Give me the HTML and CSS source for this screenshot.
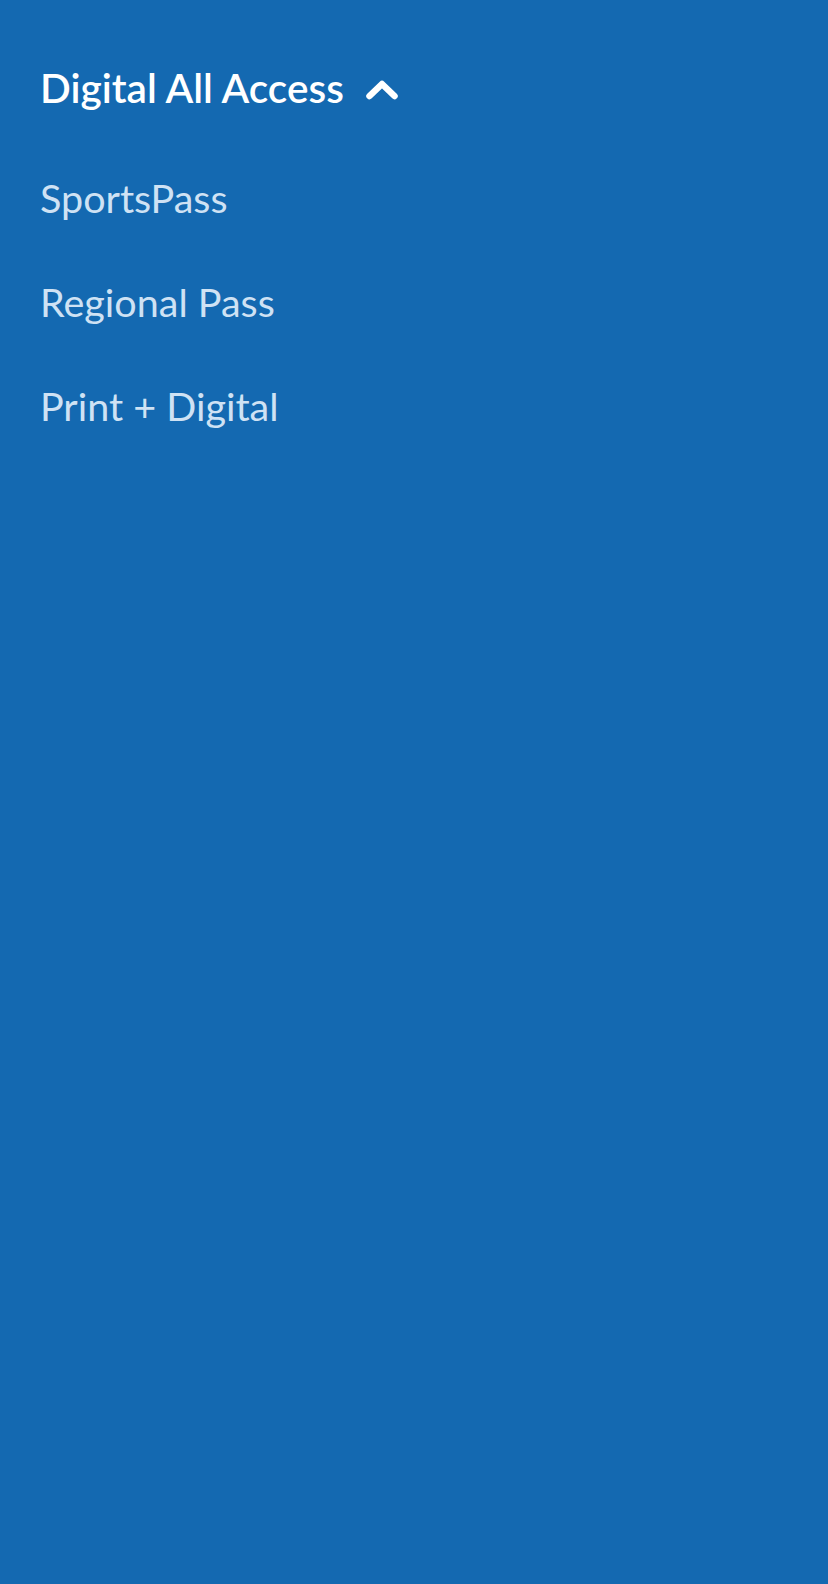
FILE: index.html
```
<!DOCTYPE html>
<html>
<head>
<meta charset="utf-8">
<link rel="stylesheet" href="styles.css">
</head>
<body>
<nav class="menu">
  <div class="menu-head">
    <span class="menu-title">Digital All Access</span>
    <svg class="chev" width="32" height="22" viewBox="0 0 32 22"><path d="M3.5 18 L16 6 L28.5 18" fill="none" stroke="#fff" stroke-width="6.5" stroke-linecap="round" stroke-linejoin="round"/></svg>
  </div>
  <ul class="menu-list">
    <li class="menu-item">SportsPass</li>
    <li class="menu-item">Regional Pass</li>
    <li class="menu-item">Print + Digital</li>
  </ul>
</nav>
</body>
</html>
```
FILE: styles.css
```
html, body {
  margin: 0;
  padding: 0;
  background: #1469b1;
  height: 100%;
}
body {
  font-family: Lato, "Noto Sans", sans-serif;
}
.menu {
  padding: 60px 0 0 40px;
}
.menu-head {
  display: flex;
  align-items: center;
  gap: 22px;
  height: 56px;
}
.menu-title {
  color: #fff;
  font-size: 40.5px;
  font-weight: 600;
  line-height: 56px;
}
.chev {
  display: block;
  margin-top: 2px;
}
.menu-list {
  list-style: none;
  margin: 0;
  padding: 54px 0 0 0;
}
.menu-item {
  color: #cfe2f4;
  font-size: 39.5px;
  line-height: 56px;
  margin-bottom: 48px;
}
```
